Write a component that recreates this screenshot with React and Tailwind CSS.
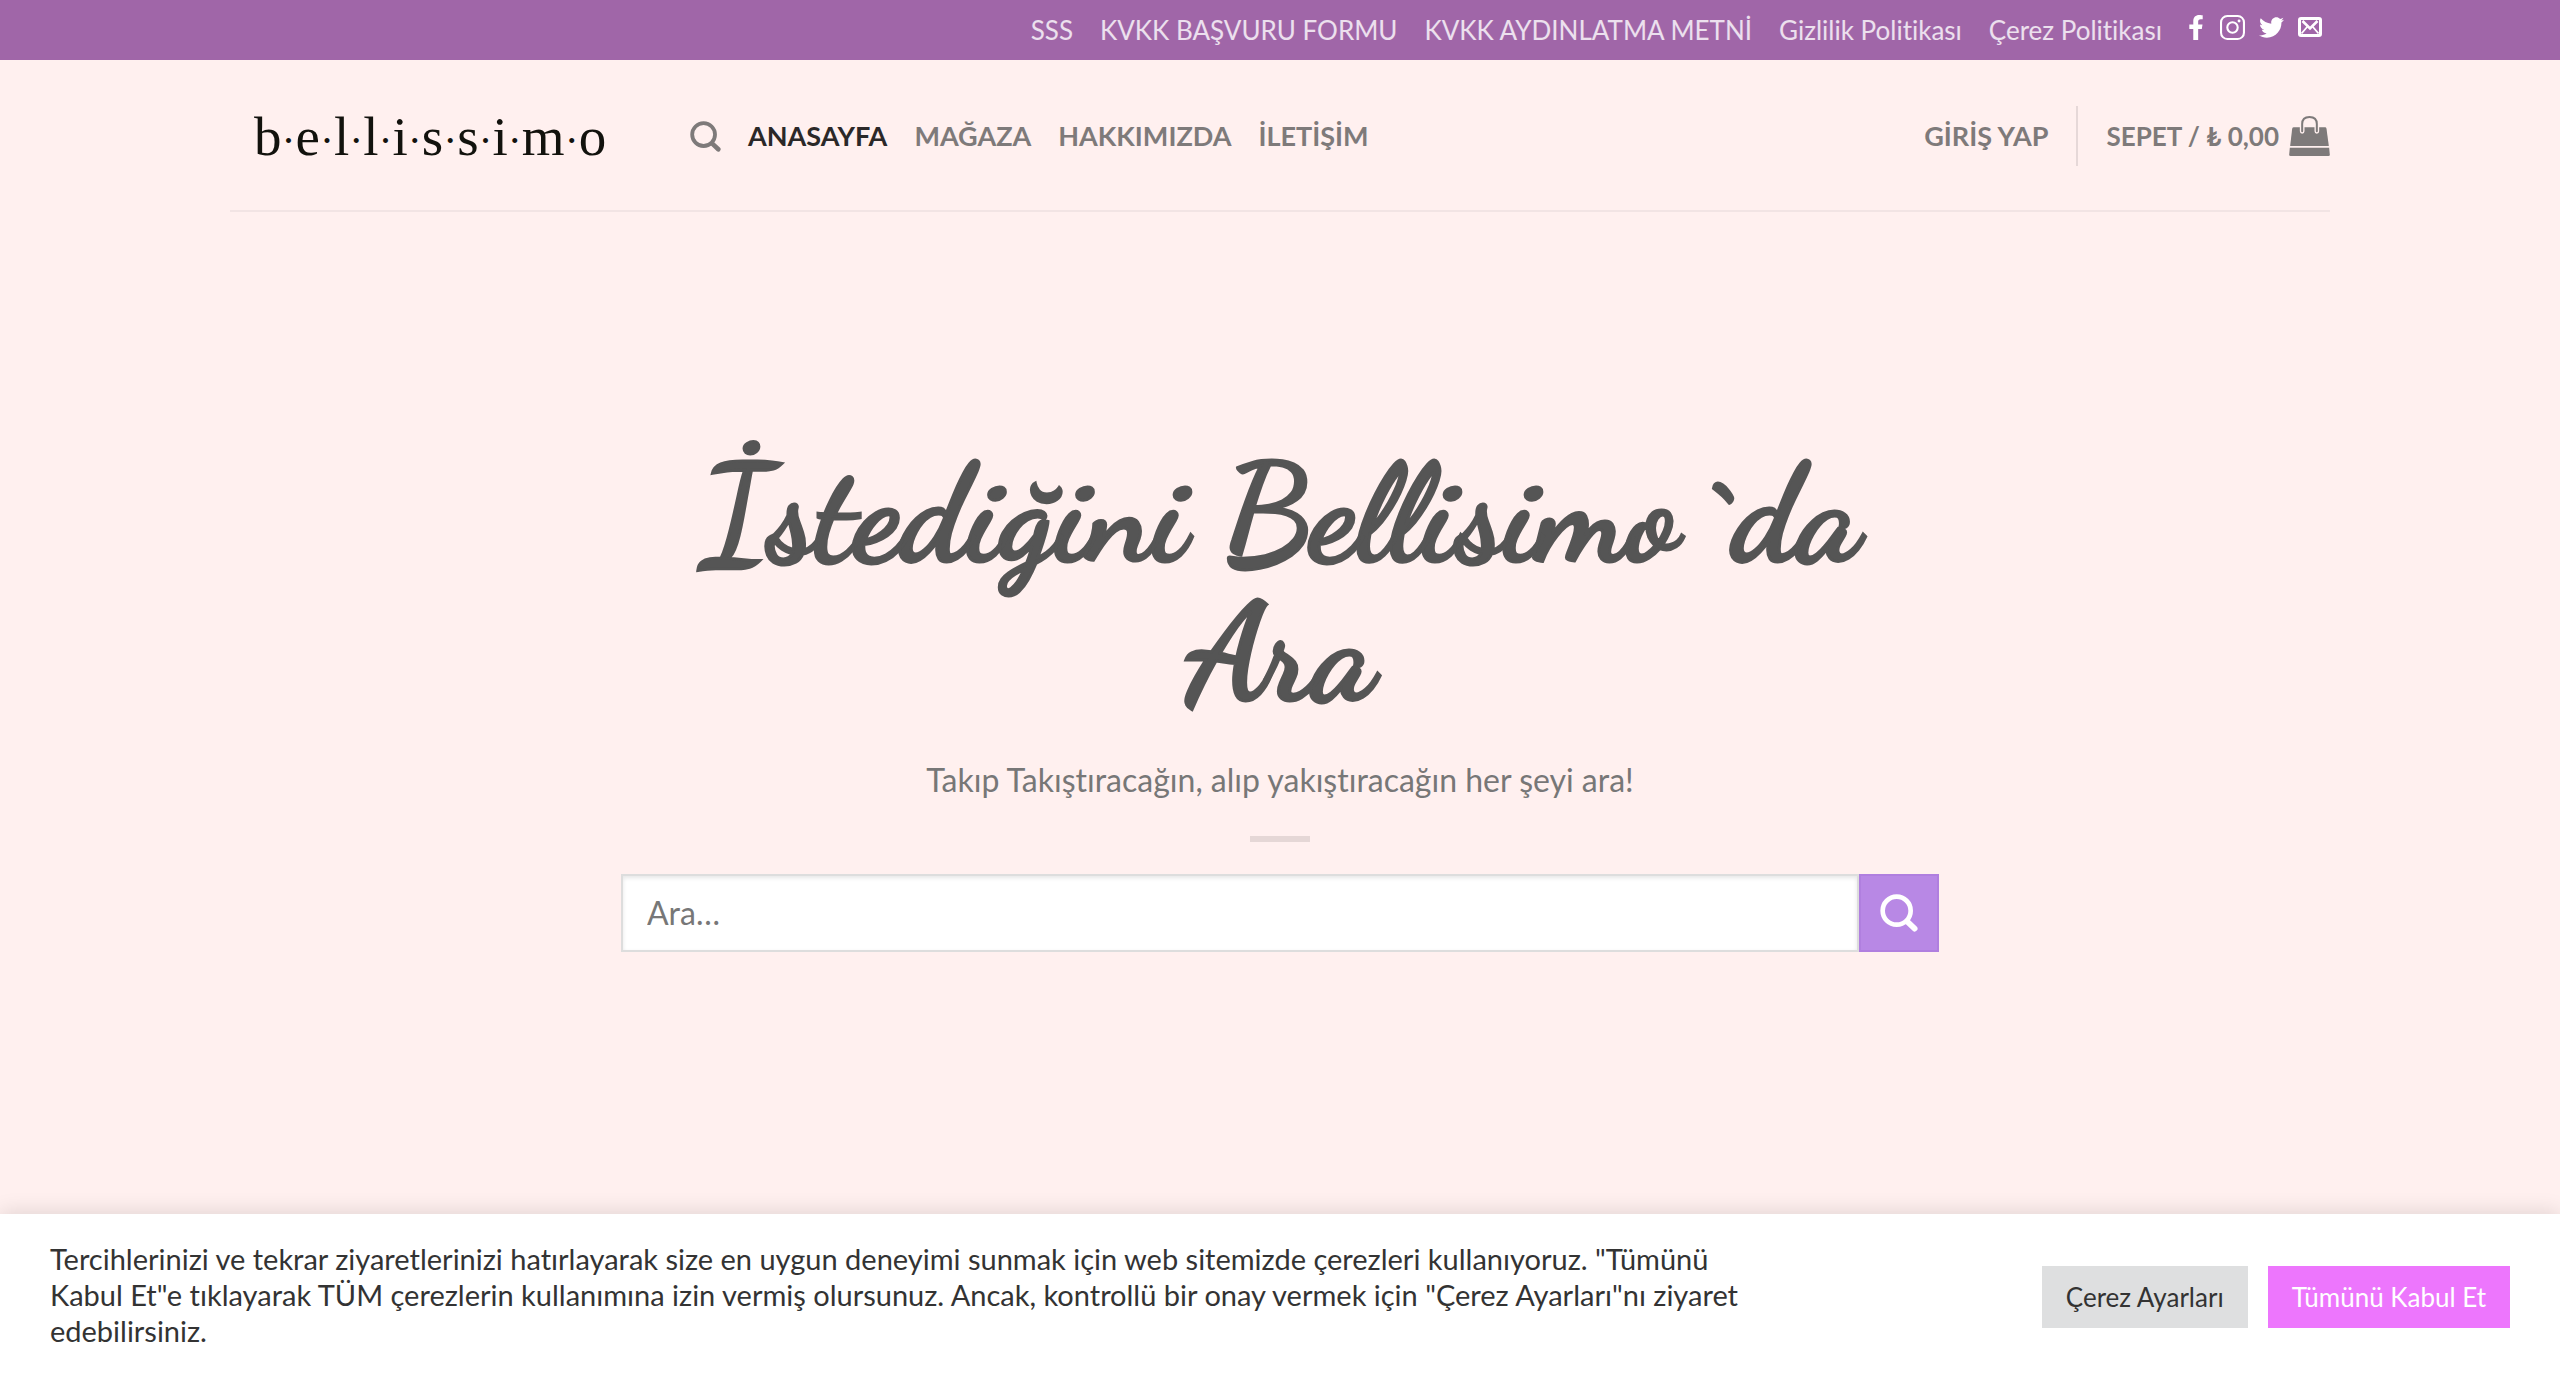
import React from "react";
import { FaFacebookF, FaTwitter } from "react-icons/fa";

const topLinks = [
  "SSS",
  "KVKK BAŞVURU FORMU",
  "KVKK AYDINLATMA METNİ",
  "Gizlilik Politikası",
  "Çerez Politikası",
];

const navLinks = ["ANASAYFA", "MAĞAZA", "HAKKIMIZDA", "İLETİŞİM"];

function SearchIcon({ className }) {
  return (
    <svg viewBox="0 0 112 114" className={className} fill="none" stroke="currentColor" aria-hidden="true">
      <circle cx="49" cy="50" r="42" strokeWidth="14" />
      <path d="M81 83 L103 104" strokeWidth="17" strokeLinecap="round" />
    </svg>
  );
}

function InstagramIcon({ className }) {
  return (
    <svg viewBox="0 0 24 24" className={className} fill="none" stroke="currentColor" strokeWidth="2" aria-hidden="true">
      <rect x="1" y="1" width="22" height="22" rx="6" />
      <circle cx="12" cy="12" r="5" />
      <circle cx="18.3" cy="5.7" r="1.4" fill="currentColor" stroke="none" />
    </svg>
  );
}

function MailIcon({ className }) {
  return (
    <svg viewBox="0 0 24 20" className={className} fill="none" stroke="currentColor" aria-hidden="true">
      <rect x="1.5" y="1.5" width="21" height="17" rx="1.5" strokeWidth="3" />
      <path d="M4.5 4 L12 11.5 L19.5 4" strokeWidth="2.6" />
      <path d="M3.5 16.5 L9.5 9.5 M20.5 16.5 L14.5 9.5" strokeWidth="1.8" />
    </svg>
  );
}

function BagIcon({ className }) {
  return (
    <svg viewBox="0 0 122 120" className={className} aria-hidden="true">
      <path d="M14 34 Q10 34 9 38 L3 90 H119 L112 38 Q111 34 108 34 Z" fill="currentColor" />
      <path d="M2 95 H120 L122 116 Q122 120 118 120 H4 Q0 120 0 116 Z" fill="currentColor" />
      <path d="M39 46 V24 Q39 3 61 3 Q83 3 83 24 V46" fill="none" stroke="#fff0ef" strokeWidth="14" strokeLinecap="round" />
      <path d="M39 46 V24 Q39 3 61 3 Q83 3 83 24 V46" fill="none" stroke="currentColor" strokeWidth="6" strokeLinecap="round" />
    </svg>
  );
}

function Logo() {
  return (
    <a href="#" aria-label="bellissimo" className="w-[460px] pl-6 font-['Liberation_Serif',serif] text-[55px] leading-none font-normal text-[#12120d]">
      {"bellissimo".split("").map((letter, i) => (
        <React.Fragment key={i}>
          {i > 0 && <span className="text-[42px]">·</span>}
          {letter}
        </React.Fragment>
      ))}
    </a>
  );
}

export default function App() {
  return (
    <div className="flex min-h-screen flex-col bg-[#fff0ef] font-['Lato',sans-serif] text-[#777] [font-variant-ligatures:none]">
      <div className="bg-[#a066a8]">
        <div className="mx-auto flex h-[60px] max-w-[2100px] items-center justify-end">
          <nav className="flex items-center gap-[27px] text-[26px] text-white/80">
            {topLinks.map((label) => (
              <a key={label} href="#" className="whitespace-nowrap">{label}</a>
            ))}
          </nav>
          <div className="flex items-center gap-3.5 pr-2 pb-1.5 pl-6 text-white">
            <a href="#" aria-label="Facebook" className="flex w-5 justify-center"><FaFacebookF className="size-[25px]" /></a>
            <a href="#" aria-label="Instagram"><InstagramIcon className="size-[25px]" /></a>
            <a href="#" aria-label="Twitter"><FaTwitter className="size-[25px]" /></a>
            <a href="#" aria-label="E-posta"><MailIcon className="h-5 w-6" /></a>
          </div>
        </div>
      </div>

      <header className="mx-auto flex h-[152px] w-full max-w-[2100px] items-center border-b-2 border-[#f2e4e4] pt-0.5 text-[27px] font-bold text-[#7e7a7a]">
        <Logo />
        <nav className="flex items-center gap-[27px]">
          <a href="#" aria-label="Ara"><SearchIcon className="size-[31px]" /></a>
          {navLinks.map((label, i) => (
            <a key={label} href="#" className={i === 0 ? "text-[#2b2828]" : ""}>{label}</a>
          ))}
        </nav>
        <div className="ml-auto flex items-center gap-7">
          <a href="#">GİRİŞ YAP</a>
          <span className="h-[60px] w-0.5 bg-[#e6d8d8]" />
          <a href="#" className="flex items-center gap-2.5 text-[26px]">
            SEPET / ₺ 0,00
            <BagIcon className="h-10 w-[41px]" />
          </a>
        </div>
      </header>

      <main className="mx-auto flex w-full max-w-[1318px] grow flex-col items-center pt-[233px] text-center">
        <h1 className="font-['Dancing_Script',cursive] text-[136px] leading-[139px] font-bold text-[#555] [-webkit-text-stroke:3px_#555]">
          İstediğini Bellisimo `da Ara
        </h1>
        <p className="mt-[31px] text-[32px] leading-[52px]">Takıp Takıştıracağın, alıp yakıştıracağın her şeyi ara!</p>
        <div className="mt-[30px] h-1.5 w-[60px] bg-[#e5d7d6]" />
        <form className="mt-8 flex h-[78px] w-full" onSubmit={(e) => e.preventDefault()}>
          <input
            type="search"
            aria-label="Ara"
            placeholder="Ara…"
            className="min-w-0 grow border-2 border-[#ddd] bg-white px-6 text-[32px] shadow-[inset_0_2px_4px_rgba(0,0,0,0.1)] outline-none placeholder:text-[#777]"
          />
          <button type="submit" aria-label="Ara" className="flex w-20 items-center justify-center border-2 border-[#b07fdf] bg-[#b888e5] text-white">
            <SearchIcon className="size-[38px]" />
          </button>
        </form>
      </main>

      <section aria-label="Çerez bildirimi" className="flex h-[164px] items-center justify-between bg-white px-[50px] text-[#333] shadow-[0_-2px_20px_rgba(0,0,0,0.12)]">
        <p className="max-w-[1730px] pb-0.5 text-[29px] leading-9">
          Tercihlerinizi ve tekrar ziyaretlerinizi hatırlayarak size en uygun deneyimi sunmak için web sitemizde çerezleri kullanıyoruz. "Tümünü Kabul Et"e tıklayarak TÜM çerezlerin kullanımına izin vermiş olursunuz. Ancak, kontrollü bir onay vermek için "Çerez Ayarları"nı ziyaret edebilirsiniz.
        </p>
        <div className="flex gap-5 pt-0.5 text-[26px]">
          <button className="h-[62px] bg-[#dedfe0] px-6 text-[#333]">Çerez Ayarları</button>
          <button className="h-[62px] bg-[#ed76fd] px-6 text-white">Tümünü Kabul Et</button>
        </div>
      </section>
    </div>
  );
}
